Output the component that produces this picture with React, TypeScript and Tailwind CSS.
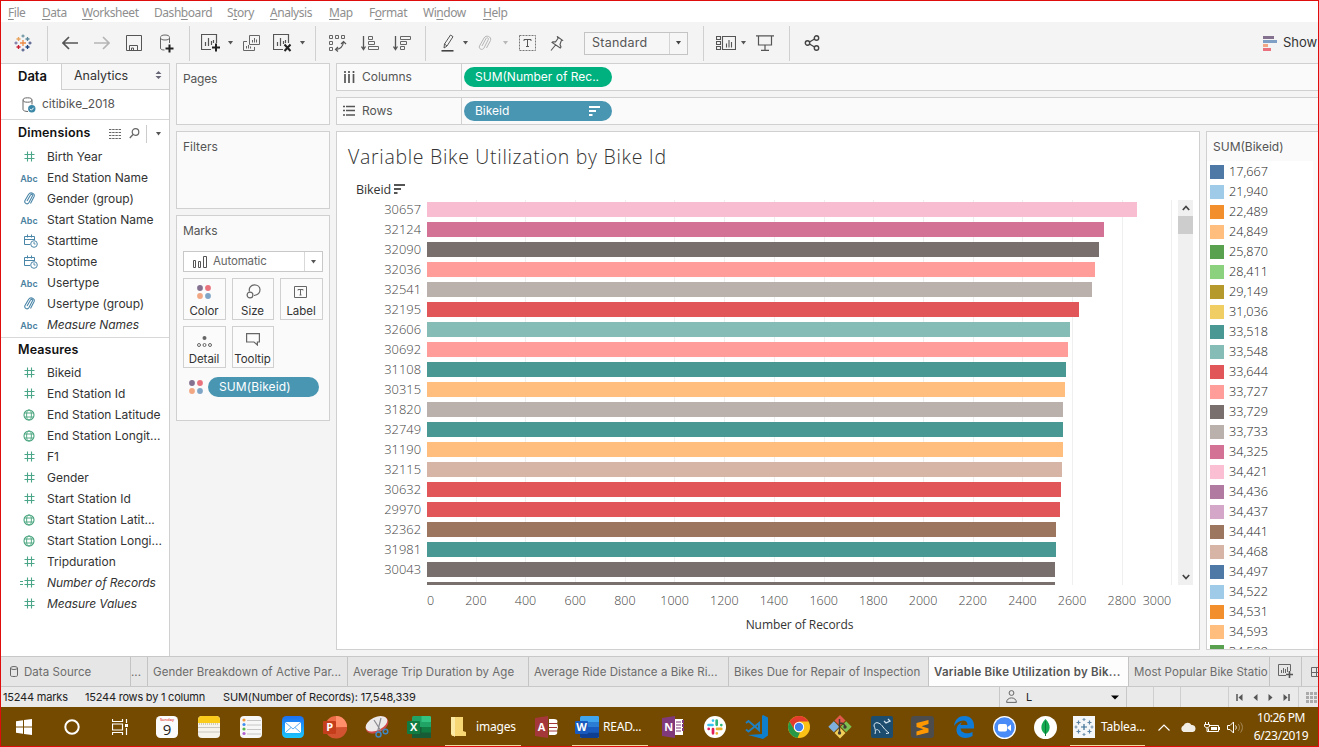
import React from 'react';

type Kids = { children?: React.ReactNode };

function Svg({ w, h, children, className = '' }: Kids & { w: number; h: number; className?: string }) {
  return (
    <svg width={w} height={h} viewBox={`0 0 ${w} ${h}`} fill="none" className={`block shrink-0 ${className}`}>
      {children}
    </svg>
  );
}

function Slot({ className, children }: Kids & { className: string }) {
  return <div className={`flex shrink-0 items-center justify-center ${className}`}>{children}</div>;
}

function Sep({ className = '' }: { className?: string }) {
  return <div className={`h-[35px] w-px shrink-0 bg-[#d0d0d0] ${className}`} />;
}

function Caret({ className = 'fill-[#555]' }: { className?: string }) {
  return (
    <Svg w={7} h={4} className={className}>
      <path d="M1 0h5L3.5 3.5z" />
    </Svg>
  );
}

const menus: [string, string, string, string][] = [
  ['', 'F', 'ile', 'w-[34px]'],
  ['', 'D', 'ata', 'w-[40px]'],
  ['', 'W', 'orksheet', 'w-[72px]'],
  ['Dash', 'b', 'oard', 'w-[73px]'],
  ['S', 't', 'ory', 'w-[43px]'],
  ['', 'A', 'nalysis', 'w-[59px]'],
  ['', 'M', 'ap', 'w-[40px]'],
  ['F', 'o', 'rmat', 'w-[54px]'],
  ['Wi', 'n', 'dow', 'w-[60px]'],
  ['', 'H', 'elp', 'w-[40px]'],
];

function MenuBar() {
  return (
    <div className="flex h-[22px] shrink-0 bg-white pl-2 pt-[4px] font-['Noto_Sans',sans-serif] text-[12px] leading-[18px] tracking-[-0.450px] text-[#8e8e8e]">
      {menus.map(([a, u, b, w]) => (
        <div key={a + u + b} className={`shrink-0 whitespace-nowrap ${w}`}>
          {a}
          <span className="underline underline-offset-2">{u}</span>
          {b}
        </div>
      ))}
    </div>
  );
}

function Plus({ x, y, r, c }: { x: number; y: number; r: number; c: string }) {
  return <path d={`M${x - r} ${y}h${2 * r}M${x} ${y - r}v${2 * r}`} stroke={c} />;
}

function Toolbar() {
  return (
    <div className="flex h-[41px] shrink-0 items-center bg-[#f4f4f4] pt-px">
      <Slot className="w-[47px]">
        <Svg w={18} h={18} className="-translate-x-px">
          <g strokeWidth="1.3">
            <Plus x={9} y={9} r={3} c="#eb8a44" />
            <Plus x={4.5} y={5} r={2} c="#e8a35c" />
            <Plus x={13.5} y={5} r={2} c="#5b879b" />
            <Plus x={4.5} y={13} r={2} c="#c72035" />
            <Plus x={13.5} y={13} r={2} c="#1f457e" />
            <Plus x={9} y={2} r={1.5} c="#7199a6" />
            <Plus x={9} y={16} r={1.5} c="#5b6591" />
            <Plus x={2} y={9} r={1.5} c="#7b7ba8" />
            <Plus x={16} y={9} r={1.5} c="#5b6591" />
          </g>
        </Svg>
      </Slot>
      <Sep />
      <Slot className="ml-[6px] w-8">
        <Svg w={16} h={14}>
          <path d="M16 7H1M7 1L1 7l6 6" stroke="#555" strokeWidth="1.7" />
        </Svg>
      </Slot>
      <Slot className="w-8">
        <Svg w={16} h={14}>
          <path d="M0 7h15M9 1l6 6-6 6" stroke="#b5b5b5" strokeWidth="1.7" />
        </Svg>
      </Slot>
      <Slot className="w-8">
        <Svg w={16} h={16}>
          <path d="M.5.5h15v15H.5zM3.500 15.500v-5h8v5M5.500 15.500v-2.500h2v2.500" stroke="#555" />
        </Svg>
      </Slot>
      <Slot className="w-8">
        <Svg w={16} h={19}>
          <path d="M2.500 4v10c0 1.500 1.500 2 4 2M11.500 9V4" stroke="#666" />
          <ellipse cx="7" cy="3.500" rx="4.500" ry="2.500" stroke="#666" />
          <path d="M11.500 10.500v8M7.500 14.500h8" stroke="#222" strokeWidth="2" />
        </Svg>
      </Slot>
      <Sep className="ml-[7px]" />
      <Slot className="ml-1 w-8">
        <Svg w={19} h={18}>
          <path d="M10 15.500H.5V.5h15V9M4.500 12V8M7.500 12V4M10.500 11V7M12.500 9V6" stroke="#555" strokeWidth="1.2" />
          <path d="M15 9.500v8M11 13.500h8" stroke="#222" strokeWidth="2" />
        </Svg>
      </Slot>
      <Slot className="w-2"><Caret /></Slot>
      <Slot className="ml-px w-8">
        <Svg w={17} h={16}>
          <path d="M6.500.5h10v9h-10zM4 6.500H.5v9h11V12M9.500 7.500V5M11.500 7.500V3M13.500 7.500V4.500M3.500 13.500V11M5.500 13.500V10M7.500 13.500v-2" stroke="#666" />
        </Svg>
      </Slot>
      <Slot className="w-8">
        <Svg w={19} h={18} className="-translate-x-px">
          <path d="M10 15.500H.5V.5h15V9M4.500 12V8M7.500 12V4M10.500 10V7M12.500 9V6" stroke="#555" strokeWidth="1.2" />
          <path d="M11.500 10.500l6 6.500M17.500 10.500l-6 6.500" stroke="#222" strokeWidth="2" />
        </Svg>
      </Slot>
      <Slot className="w-2"><Caret className="-translate-x-px fill-[#555]" /></Slot>
      <Sep className="ml-2" />
      <Slot className="ml-[6px] w-8">
        <Svg w={18} h={17}>
          <path d="M.5.5h3v3h-3zM6.500.5h3v3h-3zM12.500.5h3v3h-3zM.5 6.500h3v3h-3zM.5 12.500h3v3h-3z" stroke="#666" />
          <path d="M7 14.500c4-.5 7-3.500 7.500-7.500M12 9l2.500-2.500L17 9M9 12l-2.500 2.500L9 16.500" stroke="#555" strokeWidth="1.200" />
        </Svg>
      </Slot>
      <Slot className="w-8">
        <Svg w={18} h={15}>
          <path d="M2.500 0v13M.5 10.500l2 3 2-3" stroke="#555" strokeWidth="1.300" />
          <path d="M7.500.5h4v3h-4zM7.500 5.500h6v3h-6zM7.500 10.500h10v3h-10z" stroke="#666" />
        </Svg>
      </Slot>
      <Slot className="w-8">
        <Svg w={18} h={15}>
          <path d="M2.500 0v13M.5 10.500l2 3 2-3" stroke="#555" strokeWidth="1.300" />
          <path d="M7.500.5h10v3h-10zM7.500 5.500h6v3h-6zM7.500 10.500h4v3h-4z" stroke="#666" />
        </Svg>
      </Slot>
      <Sep className="ml-[7px]" />
      <Slot className="ml-2 w-7">
        <Svg w={14} h={18}>
          <path d="M3 14l.5-4L9.500 1l2.500 1.700L6 12zM3.500 10L6 12" stroke="#555" />
          <path d="M.5 16.800h12" stroke="#444" strokeWidth="1.600" />
        </Svg>
      </Slot>
      <Slot className="w-[6px]"><Caret /></Slot>
      <Slot className="ml-[3px] w-7">
        <Svg w={14} h={16}>
          <path d="M4 11l4-7.500c1-1.500 3-.5 2.300 1L6 13c-1.500 2.800-5.800 1-4.500-2L6 3c2-3.500 8-1.500 6.500 2.500L8.500 13" stroke="#b5b5b5" />
        </Svg>
      </Slot>
      <Slot className="ml-[3px] w-2"><Caret className="-translate-x-px fill-[#b8b8b8]" /></Slot>
      <Slot className="ml-1 w-7">
        <Svg w={17} h={16} className="-translate-x-px">
          <rect x=".5" y=".5" width="16" height="15" stroke="#777" strokeDasharray="2 1" />
          <path d="M5 6V4.500h7V6M8.500 4.500v7M7 11.500h3" stroke="#555" />
        </Svg>
      </Slot>
      <Slot className="ml-px w-7">
        <Svg w={14} h={15}>
          <path d="M7.500.8l5 3.500-1.300.5L10 8.500l1 2.500-.7 1L2 6.500l.8-.8 2.700.2L8 2.500zM5.500 9L1 14.500" stroke="#555" strokeWidth="1.100" />
        </Svg>
      </Slot>
      <div className="ml-[13px] flex h-[23px] w-[104px] shrink-0 items-center border border-[#c4c4c4] bg-[#f6f6f6] font-['Inter',sans-serif] text-[12.500px] text-[#555]">
        <span className="flex-1 pl-[7px] tracking-[0.250px]">Standard</span>
        <span className="flex h-full w-[18px] items-center justify-center border-l border-[#d4d4d4]"><Caret className="fill-[#444]" /></span>
      </div>
      <Sep className="ml-[15px]" />
      <Slot className="ml-[7px] w-[30px]">
        <Svg w={20} h={14}>
          <path d="M.5.5h4v3h-4zM.5 5.500h4v3h-4zM.5 10.500h4v3h-4zM6.500.5h13v13h-13zM10.500 11.500v-4M13 11.500V4M15.500 11.500V6" stroke="#555" strokeWidth="1.100" />
        </Svg>
      </Slot>
      <Slot className="w-[6px]"><Caret className="-translate-x-px fill-[#555]" /></Slot>
      <Slot className="ml-1 w-7">
        <Svg w={18} h={16}>
          <path d="M0 .8h18M2.500 1v9h13V1M9 10v5M5 15.300h8" stroke="#555" strokeWidth="1.200" />
        </Svg>
      </Slot>
      <Sep className="ml-[10px]" />
      <Slot className="ml-2 w-7">
        <Svg w={16} h={16}>
          <g stroke="#444" strokeWidth="1.400">
            <circle cx="3.500" cy="8" r="2.200" />
            <circle cx="12.500" cy="3" r="2.200" />
            <circle cx="12.500" cy="13" r="2.200" />
            <path d="M5.500 7l5-3M5.500 9l5 3" />
          </g>
        </Svg>
      </Slot>
      <Svg w={14} h={15} className="ml-[437px]">
        <path d="M0 0h11v3H0z" fill="#84708f" />
        <path d="M0 4h14v3H0z" fill="#7f9fc4" />
        <path d="M0 8h5v3H0z" fill="#f1a783" />
        <path d="M0 12h8v3H0z" fill="#e9727d" />
      </Svg>
      <span className="ml-[6px] font-['Inter',sans-serif] text-[13px] text-[#333]">Show</span>
    </div>
  );
}

type IconKind = 'num' | 'abc' | 'clip' | 'date' | 'geo' | 'calc';

function FieldIcon({ kind }: { kind: IconKind }) {
  if (kind === 'abc')
    return <span className="translate-y-px font-['Inter',sans-serif] text-[9px] font-semibold text-[#4a7f9f]">Abc</span>;
  if (kind === 'clip')
    return (
      <Svg w={13} h={13}>
        <path d="M4 9l3.500-6c1-1.300 2.500-.5 2 .8L6 10.500C4.500 13 .8 11.500 2 8.500L5.500 2.500c2-3 7-1.300 5.500 2.300L7.500 11.500" stroke="#4a86a8" strokeWidth="1.100" />
      </Svg>
    );
  if (kind === 'date')
    return (
      <Svg w={14} h={14} className="translate-x-[2px]">
        <path d="M6 10.500H.5v-8h10V6M.5 5.500h10M3.500.5v3M7.500.5v3" stroke="#4a86a8" />
        <circle cx="10" cy="10" r="3.300" stroke="#4a86a8" />
        <path d="M10 8v2h1.500" stroke="#4a86a8" strokeWidth=".9" />
      </Svg>
    );
  if (kind === 'geo')
    return (
      <Svg w={12} h={12}>
        <circle cx="6" cy="6" r="5" stroke="#45a37c" strokeWidth="1.100" />
        <ellipse cx="6" cy="6" rx="2.400" ry="5" stroke="#45a37c" strokeWidth=".9" />
        <path d="M1.500 4h9M1.500 8h9" stroke="#45a37c" strokeWidth=".9" />
      </Svg>
    );
  return (
    <Svg w={kind === 'calc' ? 15 : 11} h={11} className={kind === 'calc' ? '-translate-x-[2px]' : ''}>
      <g transform={kind === 'calc' ? 'translate(4 0)' : undefined}>
        <path d="M3.500.5v10M7.500.5v10M.5 3.500h10M.5 7.500h10" stroke="#4ba588" strokeWidth="1.100" />
      </g>
      {kind === 'calc' && <path d="M0 4.500h3M0 7.500h3" stroke="#4ba588" />}
    </Svg>
  );
}

function Field({ kind, label, italic }: { kind: IconKind; label: string; italic?: boolean }) {
  return (
    <div className="flex h-[21px] items-center">
      <span className="flex w-[56px] shrink-0 items-center justify-center">
        <FieldIcon kind={kind} />
      </span>
      <span className={`-ml-[10px] whitespace-nowrap text-[12px] text-[#333] ${italic ? 'tracking-[-0.100px] italic' : 'tracking-[-0.010px]'}`}>{label}</span>
    </div>
  );
}

const dimensions: [IconKind, string, boolean?][] = [
  ['num', 'Birth Year'],
  ['abc', 'End Station Name'],
  ['clip', 'Gender (group)'],
  ['abc', 'Start Station Name'],
  ['date', 'Starttime'],
  ['date', 'Stoptime'],
  ['abc', 'Usertype'],
  ['clip', 'Usertype (group)'],
  ['abc', 'Measure Names', true],
];

const measures: [IconKind, string, boolean?][] = [
  ['num', 'Bikeid'],
  ['num', 'End Station Id'],
  ['geo', 'End Station Latitude'],
  ['geo', 'End Station Longit...'],
  ['num', 'F1'],
  ['num', 'Gender'],
  ['num', 'Start Station Id'],
  ['geo', 'Start Station Latit...'],
  ['geo', 'Start Station Longi...'],
  ['num', 'Tripduration'],
  ['calc', 'Number of Records', true],
  ['num', 'Measure Values', true],
];

function Sidebar() {
  return (
    <div className="flex w-[170px] shrink-0 flex-col border-r border-t border-[#d0d0d0] bg-white pl-px font-['Inter',sans-serif]">
      <div className="flex h-[26px] shrink-0">
        <div className="w-[60px] pl-[17px] pt-[3px] text-[13px] font-semibold text-[#111]">Data</div>
        <div className="flex flex-1 items-start justify-between border-b border-l border-[#cfcfcf] bg-[#f7f7f7] pl-3 pr-[7px] pt-[3px] text-[12.500px] text-[#333]">
          Analytics
          <Svg w={7} h={8} className="mt-[4px]">
            <path d="M3.500 0L6.500 3h-6zM3.500 8l3-3h-6z" fill="#667" />
          </Svg>
        </div>
      </div>
      <div className="flex h-[30px] shrink-0 items-center border-b border-[#d8d8d8] pl-[21px] text-[12px] text-[#555]">
        <Svg w={14} h={16}>
          <path d="M1 3.500v9C1 13.500 3 14.500 6 14.500M10 3.500v4" stroke="#666" />
          <ellipse cx="5.500" cy="3" rx="4.500" ry="2.200" stroke="#666" />
          <circle cx="9.800" cy="11.800" r="3.700" fill="#3b87a8" />
          <path d="M8 11.800l1.400 1.400 2.300-2.500" stroke="#fff" />
        </Svg>
        <span className="-mt-px ml-[6px]">citibike_2018</span>
      </div>
      <div className="flex h-[26px] shrink-0 items-center pl-[17px] pt-px">
        <span className="w-[91px] text-[12.500px] font-semibold tracking-[0.170px] text-[#111]">Dimensions</span>
        <Svg w={12} h={10}>
          <path d="M0 .5h12M0 3.500h12M0 6.500h12M0 9.500h12" stroke="#666" strokeDasharray="2.400 .8" />
        </Svg>
        <Svg w={11} h={11} className="ml-2">
          <circle cx="6.500" cy="4" r="3.300" stroke="#666" strokeWidth="1.200" />
          <path d="M4 6.500L.8 10" stroke="#666" strokeWidth="1.300" />
        </Svg>
        <div className="ml-[6px] h-[18px] w-px bg-[#ccc]" />
        <Caret className="ml-[8px] fill-[#555]" />
      </div>
      <div className="h-[192px] shrink-0 border-b border-[#d8d8d8]">
        {dimensions.map(([k, l, i]) => <Field key={l} kind={k} label={l} italic={i} />)}
      </div>
      <div className="flex h-[24px] shrink-0 items-center pl-[17px] text-[12.500px] font-semibold tracking-[0.100px] text-[#111]">Measures</div>
      {measures.map(([k, l, i]) => <Field key={l} kind={k} label={l} italic={i} />)}
    </div>
  );
}

function ColorDots() {
  return (
    <Svg w={14} h={14} className="-translate-x-px">
      <circle cx="3" cy="3" r="2.900" fill="#84708f" />
      <circle cx="11" cy="3" r="2.900" fill="#e9727d" />
      <circle cx="3" cy="11" r="2.900" fill="#f1a783" />
      <circle cx="11" cy="11" r="2.900" fill="#7fa5c6" />
    </Svg>
  );
}

function MarkButton({ label, children }: Kids & { label: string }) {
  return (
    <div className="flex h-[42px] flex-col items-center border border-[#d0d0d0] bg-[#fbfbfb]">
      <div className="flex h-[25px] items-center">{children}</div>
      <div className="-ml-px text-[11.500px] leading-[14px] tracking-[-0.050px] text-[#333]">{label}</div>
    </div>
  );
}

function Shelves() {
  return (
    <div className="ml-[6px] flex w-[154px] shrink-0 flex-col gap-[6px] font-['Inter',sans-serif] text-[12px] text-[#555]">
      <div className="h-[62px] border border-[#d0d0d0] bg-[#fafafa] pl-[6px] pt-[6px]"><span className="tracking-[-0.200px]">Pages</span></div>
      <div className="h-[78px] border border-[#d0d0d0] bg-[#fafafa] pl-[6px] pt-[6px]">Filters</div>
      <div className="h-[206px] border border-[#d0d0d0] bg-[#fafafa] px-[6px] pt-[6px]">
        <div className="h-[29px] tracking-[-0.150px]">Marks</div>
        <div className="flex h-[21px] items-center border border-[#c8c8c8] bg-white pl-[9px]">
          <Svg w={14} h={12}>
            <path d="M.5 4.500h2v7h-2zM5.500 5.500h2v6h-2zM10.500.5h3v11h-3z" stroke="#555" />
          </Svg>
          <span className="ml-[6px] flex-1 text-[11.500px] tracking-[-0.150px] text-[#666]">Automatic</span>
          <span className="flex h-full w-[18px] items-center justify-center border-l border-[#d8d8d8]"><Caret /></span>
        </div>
        <div className="mt-[6px] grid grid-cols-[43px_42px_43px] gap-[6px]">
          <MarkButton label="Color"><ColorDots /></MarkButton>
          <MarkButton label="Size">
            <Svg w={15} h={15}>
              <path d="M3.500 7.500C2.500 4 5 .8 8.500.8c3 0 5.500 2 5.500 5S11.500 11 8 11.500" stroke="#666" strokeWidth="1.200" />
              <circle cx="4" cy="11" r="2.900" stroke="#666" strokeWidth="1.200" />
            </Svg>
          </MarkButton>
          <MarkButton label="Label">
            <Svg w={13} h={12} className="-translate-x-px">
              <path d="M.5.5h12v11H.5zM4 4.500V3.500h5v1M6.500 3.500v5.500M5.500 9h2" stroke="#666" />
            </Svg>
          </MarkButton>
          <MarkButton label="Detail">
            <Svg w={15} h={11} className="mt-[3px]">
              <circle cx="7.500" cy="2" r="2" fill="#666" />
              <g stroke="#666">
                <circle cx="2" cy="9" r="1.500" />
                <circle cx="7.500" cy="9" r="1.500" />
                <circle cx="13" cy="9" r="1.500" />
              </g>
            </Svg>
          </MarkButton>
          <MarkButton label="Tooltip">
            <Svg w={14} h={13}>
              <path d="M.6.600h12.800v8.400h-2v3L8 9H.6z" stroke="#666" strokeWidth="1.200" />
            </Svg>
          </MarkButton>
        </div>
        <div className="mt-[9px] flex h-[20px] items-center pl-[7px]">
          <ColorDots />
          <div className="ml-1 flex h-[20px] w-[111px] items-center rounded-full bg-[#4996b2] pl-[11px] text-[12px] tracking-[0.100px] text-white">SUM(Bikeid)</div>
        </div>
      </div>
    </div>
  );
}

function SortGlyph({ className }: { className: string }) {
  return (
    <Svg w={11} h={10} className={className}>
      <path d="M0 1h11M0 5h7M0 9h3.500" strokeWidth="1.800" />
    </Svg>
  );
}

function ShelfRow({ icon, label, children }: Kids & { icon: React.ReactNode; label: string }) {
  return (
    <div className="flex h-[28px] shrink-0 border border-r-0 border-[#d0d0d0] bg-[#fafafa] font-['Inter',sans-serif] text-[12px] text-[#555]">
      <div className="flex w-[125px] shrink-0 items-center border-r border-[#d0d0d0] pl-[6px]">
        {icon}
        <span className="ml-[7px]">{label}</span>
      </div>
      <div className="flex items-center pl-[2px]">{children}</div>
    </div>
  );
}

const bars: [string, number, string][] = [
  ['30657', 710, 'bg-[#f9bdd2]'],
  ['32124', 677, 'bg-[#d37295]'],
  ['32090', 672, 'bg-[#79706e]'],
  ['32036', 668, 'bg-[#ff9d9a]'],
  ['32541', 665, 'bg-[#bab0ac]'],
  ['32195', 652, 'bg-[#e15759]'],
  ['32606', 643, 'bg-[#86bcb6]'],
  ['30692', 641, 'bg-[#ff9d9a]'],
  ['31108', 639, 'bg-[#499894]'],
  ['30315', 638, 'bg-[#ffbe7d]'],
  ['31820', 636, 'bg-[#bab0ac]'],
  ['32749', 636, 'bg-[#499894]'],
  ['31190', 636, 'bg-[#ffbe7d]'],
  ['32115', 635, 'bg-[#d7b5a6]'],
  ['30632', 634, 'bg-[#e15759]'],
  ['29970', 633, 'bg-[#e15759]'],
  ['32362', 629, 'bg-[#9d7660]'],
  ['31981', 629, 'bg-[#499894]'],
  ['30043', 628, 'bg-[#79706e]'],
  ['30381', 628, 'bg-[#79706e]'],
];

const ticks = [200, 400, 600, 800, 1000, 1200, 1400, 1600, 1800, 2000, 2200, 2400, 2600, 2800];

function Chart() {
  return (
    <div className="flex w-[864px] shrink-0 flex-col border border-[#d0d0d0] bg-white font-['Open_Sans',sans-serif]">
      <div className="h-[48px] shrink-0 pl-[11px] pt-[11px] text-[19.500px] font-light leading-[28px] tracking-[0.700px] text-[#333]">Variable Bike Utilization by Bike Id</div>
      <div className="flex h-[20px] shrink-0 items-center pl-[19px] pt-px text-[12.500px] tracking-[-0.100px] text-[#333]">
        Bikeid
        <SortGlyph className="-mt-[3px] ml-[3px] stroke-[#555]" />
      </div>
      <div className="flex h-[385px] shrink-0">
        <div className="w-[84px] shrink-0 overflow-hidden text-right text-[12.900px] font-light leading-[18px] text-[#444]">
          {bars.map(([id]) => <div key={id} className="h-[20px]">{id}</div>)}
        </div>
        <div className="relative ml-[6px] w-[746px] shrink-0 overflow-hidden">
          <div className="absolute inset-0 flex">
            {[0, ...ticks].map((t) => <div key={t} className="w-[49.700px] shrink-0 border-r border-[#efefef]" />)}
          </div>
          <div className="relative">
            {bars.map(([id, w, c]) => (
              <div key={id} className="flex h-[20px] pt-[2px]">
                <div className={`h-[15px] ${c}`} style={{ width: w }} />
              </div>
            ))}
          </div>
        </div>
        <div className="ml-[5px] flex w-[15px] flex-col items-center justify-between bg-[#f0f0f0]">
          <div>
            <div className="flex h-[16px] items-center justify-center">
              <Svg w={8} h={6}><path d="M.8 5L4 1.500 7.200 5" stroke="#444" strokeWidth="1.700" /></Svg>
            </div>
            <div className="h-[18px] w-[15px] bg-[#cdcdcd]" />
          </div>
          <div className="flex h-[17px] items-center justify-center">
            <Svg w={8} h={6}><path d="M.8 1L4 4.500 7.200 1" stroke="#444" strokeWidth="1.700" /></Svg>
          </div>
        </div>
      </div>
      <div className="flex shrink-0 pl-[90px] pt-[7px] text-[12.500px] font-light leading-[18px] text-[#444]">
        <div className="w-[24px]">0</div>
        {ticks.map((t) => <div key={t} className="w-[49.700px] shrink-0 text-center">{t}</div>)}
        <div className="-ml-[4px]">3000</div>
      </div>
      <div className="mt-[6px] pl-[63px] text-center text-[12px] leading-[18px] tracking-[-0.080px] text-[#333]">Number of Records</div>
    </div>
  );
}

const legendColors = [
  'bg-[#4e79a7]', 'bg-[#a0cbe8]', 'bg-[#f28e2b]', 'bg-[#ffbe7d]', 'bg-[#59a14f]', 'bg-[#8cd17d]', 'bg-[#b6992d]',
  'bg-[#f1ce63]', 'bg-[#499894]', 'bg-[#86bcb6]', 'bg-[#e15759]', 'bg-[#ff9d9a]', 'bg-[#79706e]', 'bg-[#bab0ac]',
  'bg-[#d37295]', 'bg-[#fabfd2]', 'bg-[#b07aa1]', 'bg-[#d4a6c8]', 'bg-[#9d7660]', 'bg-[#d7b5a6]',
];
const legendValues = [
  '17,667', '21,940', '22,489', '24,849', '25,870', '28,411', '29,149', '31,036', '33,518', '33,548', '33,644', '33,727',
  '33,729', '33,733', '34,325', '34,421', '34,436', '34,437', '34,441', '34,468', '34,497', '34,522', '34,531', '34,593', '34,599',
];

function Legend() {
  return (
    <div className="ml-[6px] flex flex-1 flex-col overflow-hidden border border-r-0 border-[#d0d0d0] bg-[#fafafa]">
      <div className="h-[29px] shrink-0 pl-[6px] pt-[6px] font-['Inter',sans-serif] text-[12px] text-[#555]">SUM(Bikeid)</div>
      <div className="mr-[6px] flex-1 overflow-hidden bg-white pl-[3px] pt-px font-['Open_Sans',sans-serif] text-[12.700px] font-light text-[#222]">
        {legendValues.map((v, i) => (
          <div key={v} className="flex h-[20px] items-center">
            <div className={`-mt-px h-[14px] w-[14px] ${legendColors[i % 20]}`} />
            <span className="ml-[5px]">{v}</span>
          </div>
        ))}
      </div>
    </div>
  );
}

const sheets: [string, string, boolean?][] = [
  ['Gender Breakdown of Active Par...', 'w-[200px]'],
  ['Average Trip Duration by Age', 'w-[181px]'],
  ['Average Ride Distance a Bike Ri...', 'w-[200px]'],
  ['Bikes Due for Repair of Inspection', 'w-[200px]'],
  ['Variable Bike Utilization by Bik...', 'w-[200px]', true],
  ['Most Popular Bike Statio', 'w-[141px]'],
];

function SheetTabs() {
  return (
    <div className="flex h-[31px] shrink-0 border-b border-t border-[#c8c8c8] bg-[#e6e6e6] font-['Inter',sans-serif] text-[11.500px] leading-[30px] tracking-[0.050px] text-[#6c6c6c]">
      <div className="flex w-[131px] shrink-0 items-center border-r border-[#c4c4c4] pl-[10px]">
        <Svg w={8} h={11}>
          <path d="M.5 2v7.500c0 .7 1 1 3.500 1s3.500-.3 3.500-1V2" stroke="#666" />
          <ellipse cx="4" cy="2" rx="3.500" ry="1.500" stroke="#666" />
        </Svg>
        <span className="ml-[6px]">Data Source</span>
      </div>
      <div className="w-[17px] shrink-0 border-r border-[#c4c4c4]">...</div>
      {sheets.map(([s, w, active]) => (
        <div
          key={s}
          className={`shrink-0 overflow-hidden whitespace-nowrap border-r border-[#c4c4c4] pl-[5px] ${w} ${active ? 'bg-[#fdfdfd] font-semibold tracking-[0.230px] text-[#555]' : ''}`}
        >
          {s}
        </div>
      ))}
      <div className="flex w-[32px] shrink-0 items-center justify-center border-r border-[#c4c4c4]">
        <Svg w={15} h={15}>
          <path d="M8 11.500H.5V.5h12V7M3.500 9V6M5.500 9V4M7.500 9V5M9.500 8V3" stroke="#666" />
          <path d="M11.500 7v7M8 10.500h7" stroke="#555" strokeWidth="1.600" />
        </Svg>
      </div>
      <div className="flex items-center pl-[9px]">
        <Svg w={10} h={10}>
          <path d="M.5.500h12v9H.5zM.5 5.500h12M5.500.500v9" stroke="#666" />
        </Svg>
      </div>
    </div>
  );
}

function StatusBar() {
  return (
    <div className="flex h-[20px] shrink-0 bg-[#eaeaea] font-['Inter',sans-serif] text-[11px] leading-[20px] tracking-[-0.060px] text-[#222]">
      <span className="w-[82px] shrink-0 pl-[3px] tracking-[-0.200px]">15244 marks</span>
      <span className="w-[138px] shrink-0 pl-[3px] tracking-[-0.220px]">15244 rows by 1 column</span>
      <span className="w-[779px] shrink-0 pl-[3px] tracking-[-0.120px]">SUM(Number of Records): 17,548,339</span>
      <div className="flex w-[128px] shrink-0 items-center border-l border-r border-[#c8c8c8] pl-[6px]">
        <Svg w={11} h={13} className="-translate-y-px">
          <circle cx="5.500" cy="3" r="2.400" stroke="#666" />
          <path d="M.6 12.400c0-6 9.800-6 9.800 0z" stroke="#666" />
        </Svg>
        <span className="ml-[9px] flex-1">L</span>
        <Svg w={9} h={5} className="mr-[6px]"><path d="M0 .5h8L4 4.500z" fill="#000" /></Svg>
      </div>
      <div className="w-[27px] shrink-0 border-r border-[#cfcfcf]" />
      <div className="w-[27px] shrink-0 border-r border-[#cfcfcf]" />
      <div className="w-[48px] shrink-0 border-r border-[#cfcfcf]" />
      <div className="flex w-[70px] shrink-0 items-center gap-[10px] border-r border-[#cfcfcf] pl-[7px]">
        <Svg w={7} h={7}><path d="M1 0v7" stroke="#555" strokeWidth="1.500" /><path d="M6.500 0v7L2.500 3.500z" fill="#555" /></Svg>
        <Svg w={5} h={7}><path d="M4.500 0v7L.5 3.500z" fill="#555" /></Svg>
        <Svg w={5} h={7}><path d="M.5 0v7l4-3.500z" fill="#555" /></Svg>
        <Svg w={7} h={7}><path d="M6 0v7" stroke="#555" strokeWidth="1.500" /><path d="M.5 0v7l4-3.500z" fill="#555" /></Svg>
      </div>
      <div className="flex items-center pl-[7px]">
        <Svg w={12} h={11}>
          <path d="M0 1.500h12M0 5.500h12M0 9.500h12" stroke="#aaa" strokeWidth="3" strokeDasharray="3 1" />
        </Svg>
      </div>
    </div>
  );
}

function OfficeLetter({ t, x = 7.500, y = 16 }: { t: string; x?: number; y?: number }) {
  return (
    <text x={x} y={y} textAnchor="middle" fontFamily="Open Sans" fontWeight="700" fontSize="11" fill="#fff">{t}</text>
  );
}

function Taskbar() {
  return (
    <div className="flex h-[40px] shrink-0 items-center bg-[#744a00] font-['Noto_Sans',sans-serif] text-[12px] tracking-[-0.200px] text-white">
      <Slot className="w-[48px]">
        <Svg w={16} h={16}><path d="M0 2.300L7 1.300V7.500H0zM8 1.100L16 0v7.500H8zM0 8.500h7v6.200l-7-1zM8 8.500h8V16l-8-1.100z" fill="#fff" /></Svg>
      </Slot>
      <Slot className="w-[48px]">
        <Svg w={16} h={16}><circle cx="8" cy="8" r="6.700" stroke="#fff" strokeWidth="2" /></Svg>
      </Slot>
      <Slot className="w-[48px]">
        <Svg w={16} h={16}><path d="M.5 0v2.500h10V0M.5 5h10v6H.5zM.5 16v-2.500h10V16M14.500 0v4M14.500 9v7" stroke="#fff" strokeWidth="1.200" /><path d="M13 5h3v3h-3z" fill="#fff" /></Svg>
      </Slot>
      <Slot className="ml-[2px] w-[42px]">
        <Svg w={22} h={22}>
          <rect width="22" height="22" rx="4.500" fill="#fbfbfb" />
          <text x="11" y="5.300" textAnchor="middle" fontFamily="Open Sans" fontWeight="600" fontSize="4" letterSpacing="0" fill="#e53935">Sunday</text>
          <text x="11" y="18.800" textAnchor="middle" fontFamily="Open Sans" fontSize="15" letterSpacing="0" fill="#222">9</text>
        </Svg>
      </Slot>
      <Slot className="w-[42px]">
        <Svg w={22} h={22}>
          <rect width="22" height="22" rx="4" fill="#f5f3ec" />
          <path d="M0 7V4a4 4 0 0 1 4-4h14a4 4 0 0 1 4 4v3z" fill="#fbcb1c" />
          <path d="M0 11.500h22M0 16h22" stroke="#c9c7c0" />
          <path d="M1 8h20" stroke="#b0a888" strokeDasharray="1 1" />
        </Svg>
      </Slot>
      <Slot className="w-[42px]">
        <Svg w={22} h={22}>
          <rect width="22" height="22" rx="4" fill="#f7f7f7" />
          <path d="M7 4.500h14M7 9h14M7 13.500h14M7 18h14" stroke="#c6c6c6" />
          <circle cx="4" cy="4" r="1.600" fill="#f39a3c" /><circle cx="4" cy="8.500" r="1.600" fill="#3f8ef0" />
          <circle cx="4" cy="13" r="1.600" fill="#55b84c" /><circle cx="4" cy="17.500" r="1.600" fill="#b05fd0" />
        </Svg>
      </Slot>
      <Slot className="w-[42px]">
        <Svg w={22} h={22}>
          <defs><linearGradient id="mail" x2="0" y2="1"><stop stopColor="#1d6ff2" /><stop offset="1" stopColor="#1bc7fb" /></linearGradient></defs>
          <rect width="22" height="22" rx="4.500" fill="url(#mail)" />
          <rect x="3" y="6" width="16" height="11" rx="1.500" fill="#fff" />
          <path d="M3.500 6.500L11 13l7.500-6.500M3.500 16.500L9 11.500M18.500 16.500L13 11.500" stroke="#4aa3f0" strokeWidth=".9" />
        </Svg>
      </Slot>
      <Slot className="w-[42px]">
        <Svg w={24} h={24}>
          <circle cx="13" cy="12" r="11" fill="#ed6c47" /><path d="M13 1a11 11 0 0 1 11 11H13z" fill="#ff8f6b" /><path d="M2 13a11 11 0 0 0 22-1z" fill="#d35230" />
          <rect y="6" width="13" height="13" rx="1" fill="#c43e1c" /><OfficeLetter t="P" x={6.500} />
        </Svg>
      </Slot>
      <Slot className="w-[42px]">
        <Svg w={24} h={24}>
          <ellipse cx="12" cy="10" rx="12" ry="7.500" transform="rotate(-25 12 10)" fill="#d14a4a" />
          <ellipse cx="11.500" cy="8.800" rx="11.500" ry="6.600" transform="rotate(-25 11.500 8.800)" fill="#ece9ea" />
          <path d="M9 5l7 11M16 3l-3.500 14" stroke="#8a8a90" strokeWidth="1.200" />
          <circle cx="13.500" cy="19.500" r="2.500" stroke="#3f87c4" strokeWidth="1.500" /><circle cx="20.500" cy="16.500" r="2.300" stroke="#3f87c4" strokeWidth="1.500" />
        </Svg>
      </Slot>
      <Slot className="w-[42px]">
        <Svg w={24} h={22}>
          <rect x="5" width="19" height="22" rx="1.500" fill="#21a366" /><path d="M14.500 0H23l1 1v5h-9.500z" fill="#33c481" /><path d="M5 11h10v11H5zM14 16h10v6H14z" fill="#185c37" /><path d="M14.500 11H24v5.500h-9.500z" fill="#107c41" />
          <rect y="5" width="13" height="13" rx="1" fill="#107c41" /><OfficeLetter t="X" x={6.500} y={15} />
        </Svg>
      </Slot>
      <div className="ml-[5px] flex h-[38px] w-[76px] shrink-0 items-center border-b border-[#f3d9a2] pl-[6px]">
        <Svg w={15} h={20}><path d="M0 0h12v14l3 1v4H1L0 17z" fill="#f7d774" /><path d="M0 0h4v20l-4-3z" fill="#fbe9a6" /></Svg>
        <span className="ml-[10px]">images</span>
      </div>
      <Slot className="ml-[4px] w-[42px]">
        <Svg w={23} h={22}>
          <path d="M0 2l13-2v22L0 20z" fill="#a4373a" /><path d="M14 3h5c4 0 4 3 3 4l1 4-1 4c1 3-1 4-3 4h-5z" fill="#fff" /><path d="M14 7.500h8M14 11.500h8M14 15h8" stroke="#a4373a" strokeWidth="1.200" />
          <OfficeLetter t="A" x={6.500} y={15} />
        </Svg>
      </Slot>
      <div className="ml-[5px] flex h-[38px] w-[76px] shrink-0 items-center border-b border-[#f3d9a2] pl-[3px]">
        <Svg w={24} h={22}>
          <rect x="5" width="19" height="22" rx="1.500" fill="#2b7cd3" /><path d="M5 1.500L6.500 0H23l1 1v5H5z" fill="#41a5ee" /><path d="M5 11h19v5.500H5z" fill="#185abd" /><path d="M5 16.500h19v4L22.500 22h-16L5 20.500z" fill="#103f91" />
          <rect y="5" width="13" height="13" rx="1" fill="#185abd" /><OfficeLetter t="W" x={6.500} y={15} />
        </Svg>
        <span className="ml-[4px]">READ...</span>
      </div>
      <Slot className="ml-[4px] w-[42px]">
        <Svg w={23} h={22}>
          <path d="M12 3h9v16h-9z" fill="#fff" /><path d="M14 6h5M14 9h5M14 12h5M14 15h5" stroke="#80397b" strokeWidth="1.200" /><path d="M20 4h2v3h-2zM20 8h2v3h-2zM20 12h2v3h-2z" fill="#80397b" />
          <path d="M0 2l13-2v22L0 20z" fill="#80397b" /><OfficeLetter t="N" x={6.500} y={15} />
        </Svg>
      </Slot>
      <Slot className="w-[42px]">
        <Svg w={22} h={22}>
          <circle cx="11" cy="11" r="11" fill="#fff" />
          <g strokeWidth="2.700" strokeLinecap="round">
            <path d="M4.500 9h4M9 4.500v.1" stroke="#36c5f0" />
            <path d="M12.700 4.500v4.300M17.300 9v.1" stroke="#2eb67d" />
            <path d="M13 12.900h4.300M12.800 17.300v.1" stroke="#ecb22e" />
            <path d="M9 13v4.300M4.700 12.900v.1" stroke="#e01e5a" />
          </g>
        </Svg>
      </Slot>
      <Slot className="w-[42px]">
        <Svg w={24} h={24}>
          <path d="M18 0l5 2.500v18L18 24 3 20l14-1V1z" fill="#0f7ecb" />
          <path d="M1 8l2.500-2L14 15V8L3.500 16.500 1 14.500" stroke="#1f7fc0" strokeWidth="2" />
        </Svg>
      </Slot>
      <Slot className="w-[41px]">
        <Svg w={22} h={22}>
          <circle cx="11" cy="11" r="11" fill="#fbc116" />
          <path d="M1.500 5.500A11 11 0 0 1 20.500 5.500H11l-4.800 8z" fill="#e33b2e" />
          <path d="M1.500 5.500l4.800 8.200A5.500 5.500 0 0 0 12 16.300L9.500 21.900A11 11 0 0 1 1.500 5.500z" fill="#279847" />
          <circle cx="11" cy="11" r="5.200" fill="#fff" /><circle cx="11" cy="11" r="4.200" fill="#3f80ee" />
        </Svg>
      </Slot>
      <Slot className="w-[42px]">
        <Svg w={24} h={24}>
          <path d="M12 0l5.500 5.500L12 11 6.500 5.500z" fill="#e0594b" /><path d="M5.800 6.200l5.500 5.500-5.500 5.500L.3 11.700z" fill="#7fb0dd" />
          <path d="M18.200 6.200l5.500 5.500-5.500 5.500-5.500-5.500z" fill="#7fbf52" /><path d="M12 12.500l5.500 5.500-5.500 5.500L6.500 18z" fill="#f1cf5b" />
          <path d="M11.500 4v14M11.500 8c4 0 5.500 1.500 5.500 4" stroke="#443c34" strokeWidth="1.500" /><circle cx="11.500" cy="18" r="1.700" fill="#443c34" /><circle cx="17" cy="12" r="1.700" fill="#443c34" />
        </Svg>
      </Slot>
      <Slot className="w-[41px]">
        <Svg w={22} h={22}>
          <rect width="22" height="22" rx="2" fill="#1c4d6f" /><path d="M4 18c1-3 0-6-1-8 0-5 6-4 9 1 2 3 4 4 6 6l-3 .5M5 14c2-1 3 0 4 3" stroke="#dcebf5" /><path d="M13 5l2 2 4-2-2-2" stroke="#cfe0ec" strokeWidth="1.300" />
        </Svg>
      </Slot>
      <Slot className="w-[41px]">
        <Svg w={23} h={22}>
          <rect width="23" height="22" rx="3" fill="#4c4c4c" /><path d="M17.500 4v4l-7 2.200 7 2.300v4L5.500 19.500v-4l7-2.300-7-2.200V7z" fill="#ff9800" />
        </Svg>
      </Slot>
      <Slot className="w-[41px]">
        <Svg w={20} h={22}>
          <path d="M0 10C1 3 5 0 10.500 0 17 0 20 5 20 9.500V12.500H6.500c.3 5 8 6 12 3.200V20C12 24 2.500 22 2.500 14 2.500 9.500 6 7 8 6.500 6.500 7.800 6.500 9 6.500 9H13.500C13.500 2 4 4 0 10z" fill="#0f7bd8" />
        </Svg>
      </Slot>
      <Slot className="w-[41px]">
        <Svg w={23} h={23}>
          <circle cx="11.500" cy="11.500" r="11.500" fill="#fff" /><circle cx="11.500" cy="11.500" r="10.200" fill="#4a8cf7" /><rect x="5" y="8" width="9" height="7.500" rx="1.800" fill="#fff" /><path d="M14.500 11l3.500-2.500v6.500l-3.500-2.500z" fill="#fff" />
        </Svg>
      </Slot>
      <Slot className="w-[41px]">
        <Svg w={23} h={23}>
          <circle cx="11.500" cy="11.500" r="11.500" fill="#fff" /><path d="M11.500 3c6 6 5 12 0 15.500-5-3.500-6-9.500 0-15.500z" fill="#13aa52" /><path d="M11.500 5v15" stroke="#0b7a3b" strokeWidth="1" />
        </Svg>
      </Slot>
      <div className="ml-[4px] flex h-[38px] w-[75px] shrink-0 items-center border-b border-[#f3d9a2] pl-[3px]">
        <Svg w={22} h={22}>
          <rect width="22" height="22" fill="#f4f6f8" />
          <g strokeWidth="1.200">
            <Plus x={11} y={11} r={3} c="#3a6c94" /><Plus x={5.500} y={6.500} r={2} c="#5b84a5" /><Plus x={16.500} y={6.500} r={2} c="#5b84a5" /><Plus x={5.500} y={15.500} r={2} c="#5b84a5" /><Plus x={16.500} y={15.500} r={2} c="#5b84a5" />
            <Plus x={11} y={3.500} r={1.500} c="#7898b2" /><Plus x={11} y={18.500} r={1.500} c="#7898b2" /><Plus x={3} y={11} r={1.500} c="#7898b2" /><Plus x={19} y={11} r={1.500} c="#7898b2" />
          </g>
        </Svg>
        <span className="ml-[6px]">Tablea...</span>
      </div>
      <Slot className="ml-[9px] w-[20px]">
        <Svg w={12} h={7}><path d="M.5 6.500L6 1l5.500 5.500" stroke="#fff" strokeWidth="1.200" /></Svg>
      </Slot>
      <Slot className="ml-[4px] w-[20px]">
        <Svg w={16} h={10}><path d="M3.500 10a3.500 3.500 0 0 1 0-6.500A4.500 4.500 0 0 1 11.500 3 3.600 3.600 0 0 1 13 10z" fill="#f2ede4" /></Svg>
      </Slot>
      <Slot className="ml-[4px] w-[20px]">
        <Svg w={16} h={11}><path d="M5 3.500h9.500v6H4.500v-3M1.500 0v2.500M4.500 0v2.500M.5 2.500h5v2l-2.500 1.500-2.500-1.500zM3 6v3.500h2" stroke="#fff" /><path d="M7 5h6v3H7z" fill="#fff" /><path d="M15 5h1v3h-1z" fill="#fff" /></Svg>
      </Slot>
      <Slot className="ml-[3px] w-[20px]">
        <Svg w={17} h={13}><path d="M.5 4.500h2.500l3.500-3.500v11L3 8.500H.5z" stroke="#fff" /><path d="M8.500 4.500c1 1 1 3 0 4" stroke="#fff" /><path d="M11 3c2 2 2 5 0 7M13.500 1.500c2.500 3 2.500 7 0 10" stroke="#a98e60" /></Svg>
      </Slot>
      <div className="ml-[2px] w-[68px] shrink-0 text-center text-[12px] leading-[18px] tracking-[-0.500px]">
        <div>10:26 PM</div>
        <div className="tracking-[-0.250px]">6/23/2019</div>
      </div>
    </div>
  );
}

export default function App() {
  return (
    <div className="relative flex h-[747px] w-[1319px] flex-col overflow-hidden bg-[#f4f4f4]">
      <MenuBar />
      <Toolbar />
      <div className="flex h-[593px] shrink-0">
        <Sidebar />
        <Shelves />
        <div className="ml-[6px] flex flex-1 flex-col gap-[6px] overflow-hidden">
          <ShelfRow
            label="Columns"
            icon={<Svg w={12} h={12}><path d="M2 0v2M6 0v2M10.500 0v2M2 3v9M6 3v9M10.500 3v9" stroke="#555" strokeWidth="1.700" /></Svg>}
          >
            <div className="flex h-[20px] w-[148px] items-center rounded-full bg-[#00b180] pl-[11px] text-white">SUM(Number of Rec..</div>
          </ShelfRow>
          <ShelfRow
            label="Rows"
            icon={<Svg w={12} h={12}><path d="M0 1.500h2M0 5.500h2M0 10h2M3 1.500h9M3 5.500h9M3 10h9" stroke="#555" strokeWidth="1.700" /></Svg>}
          >
            <div className="flex h-[20px] w-[148px] items-center justify-between rounded-full bg-[#4996b2] pl-[11px] pr-[12px] text-white">
              Bikeid
              <SortGlyph className="stroke-white" />
            </div>
          </ShelfRow>
          <div className="flex h-[519px] shrink-0">
            <Chart />
            <Legend />
          </div>
        </div>
      </div>
      <SheetTabs />
      <StatusBar />
      <Taskbar />
      <div className="pointer-events-none absolute inset-0 border border-[#e00d0d]" />
    </div>
  );
}
